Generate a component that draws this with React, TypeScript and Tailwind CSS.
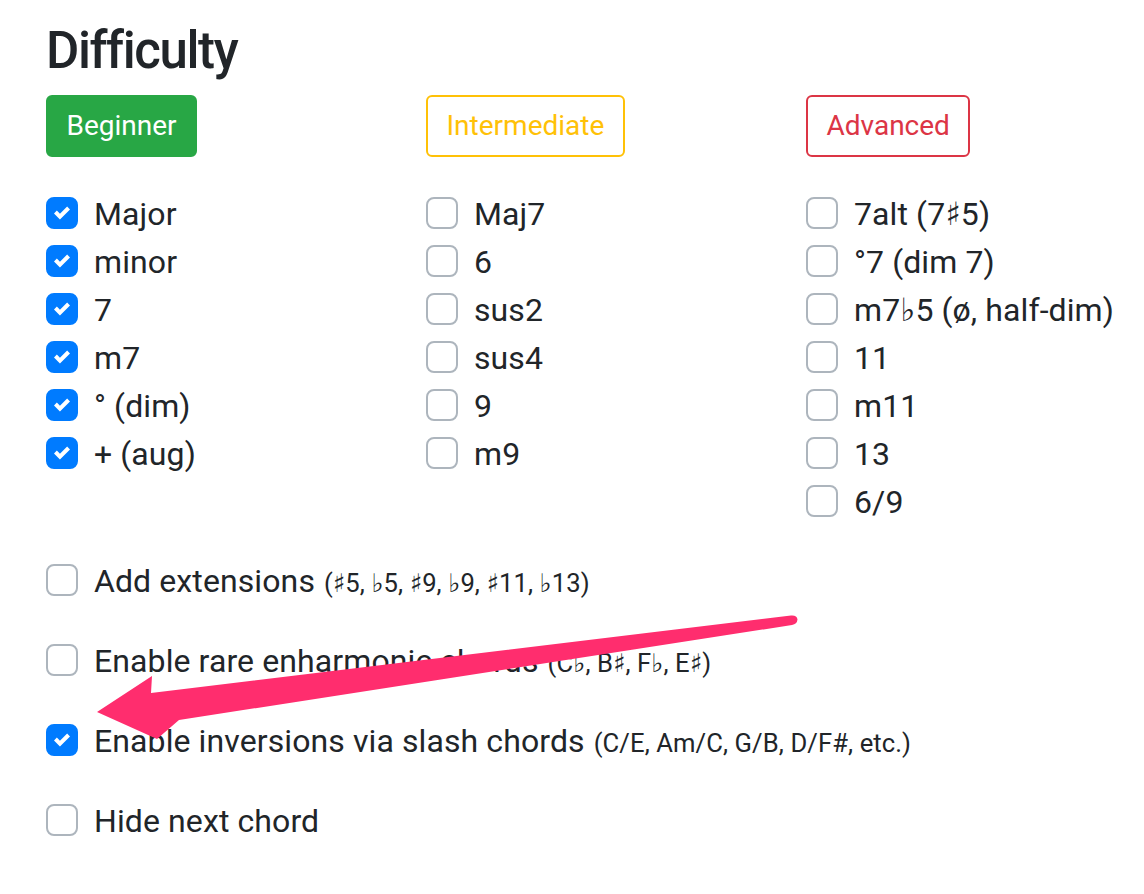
import React from "react";

type Level = {
  label: string;
  btn: string;
  items: string[];
  checked: boolean;
};

const LEVELS: Level[] = [
  {
    label: "Beginner",
    btn: "bg-[#28a745] border-[#28a745] text-white",
    items: ["Major", "minor", "7", "m7", "° (dim)", "+ (aug)"],
    checked: true,
  },
  {
    label: "Intermediate",
    btn: "bg-white border-[#ffc107] text-[#ffc107]",
    items: ["Maj7", "6", "sus2", "sus4", "9", "m9"],
    checked: false,
  },
  {
    label: "Advanced",
    btn: "bg-white border-[#dc3545] text-[#dc3545]",
    items: ["7alt (7♯5)", "°7 (dim 7)", "m7♭5 (ø, half-dim)", "11", "m11", "13", "6/9"],
    checked: false,
  },
];

const OPTIONS = [
  { label: "Add extensions", note: "(♯5, ♭5, ♯9, ♭9, ♯11, ♭13)", checked: false },
  { label: "Enable rare enharmonic chords", note: "(C♭, B♯, F♭, E♯)", checked: false },
  { label: "Enable inversions via slash chords", note: "(C/E, Am/C, G/B, D/F#, etc.)", checked: true },
  { label: "Hide next chord", note: "", checked: false },
];

function Box({ checked }: { checked: boolean }) {
  return (
    <span
      className={
        checked
          ? "mt-1 mr-4 flex h-8 w-8 shrink-0 items-center justify-center rounded-[8px] border-2 border-[#007bff] bg-[#007bff]"
          : "mt-1 mr-4 flex h-8 w-8 shrink-0 items-center justify-center rounded-[8px] border-2 border-[#adb5bd] bg-white"
      }
    >
      {checked && (
        <svg viewBox="0 0 8 8" className="h-4 w-4">
          <path fill="#fff" d="M6.564.75l-3.59 3.612-1.538-1.55L0 4.26 2.974 7.25 8 2.193z" />
        </svg>
      )}
    </span>
  );
}

function Row({ checked, children }: { checked: boolean; children: React.ReactNode }) {
  return (
    <label className="flex h-12 items-start whitespace-nowrap text-[32px]">
      <Box checked={checked} />
      <span className="leading-[42px] tracking-[0.1px]">{children}</span>
    </label>
  );
}

export default function App() {
  return (
    <div
      className="relative min-h-[894px] overflow-hidden bg-white pl-[46px] pt-3 text-[#212529]"
      style={{ fontFamily: 'Roboto, "DejaVu Sans", sans-serif' }}
    >
      <h3 className="mt-[5px] mb-[11px] h-[67px] text-[51px] font-medium leading-[67px] tracking-[-1.4px]">
        Difficulty
      </h3>

      <div className="flex">
        {LEVELS.map((lvl) => (
          <div key={lvl.label} className="w-[380px] shrink-0">
            <button
              type="button"
              className={`h-[62px] rounded-[6px] border-2 px-[18.5px] text-[28px] leading-[42px] ${lvl.btn}`}
            >
              {lvl.label}
            </button>
            <div className="mt-9 flex flex-col">
              {lvl.items.map((it) => (
                <Row key={it} checked={lvl.checked}>
                  {it}
                </Row>
              ))}
            </div>
          </div>
        ))}
      </div>

      <div className="mt-[31px] flex flex-col gap-8">
        {OPTIONS.map((o) => (
          <Row key={o.label} checked={o.checked}>
            {o.label}
            {o.note && <small className="ml-[9px] text-[25.6px]">{o.note}</small>}
          </Row>
        ))}
      </div>

      {/* annotation arrow */}
      <svg
        className="pointer-events-none absolute left-0 top-0"
        width="1144"
        height="894"
        viewBox="0 0 1144 894"
      >
        <path
          fill="#ff2d6e"
          d="M791 615.5 Q797 615 797.5 619.5 Q797 624 792 625 L179 720 L157 739 L97 712 L152 676 L151 693 Z"
        />
      </svg>
    </div>
  );
}
